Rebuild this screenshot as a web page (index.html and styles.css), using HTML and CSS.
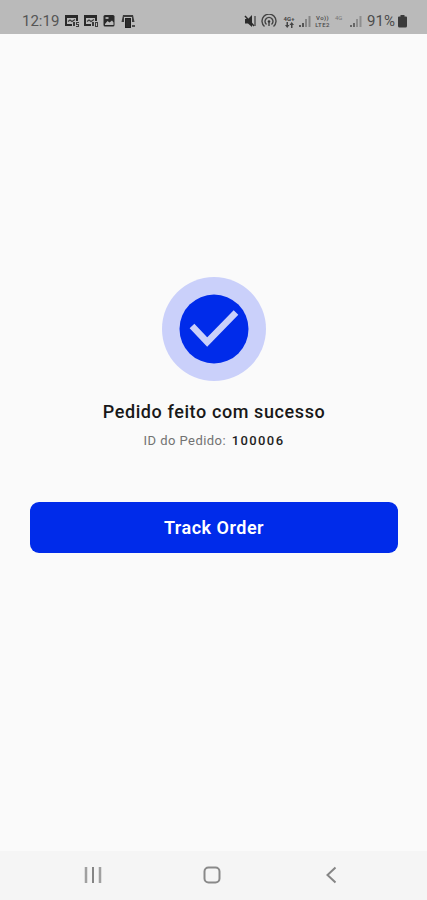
FILE: index.html
```
<!DOCTYPE html>
<html lang="pt">
<head>
  <meta charset="UTF-8" />
  <meta name="viewport" content="width=device-width, initial-scale=1.0"/>
  <title>Pedido feito com sucesso</title>
  <link rel="stylesheet" href="styles.css">
</head>
<body>
  <div class="screen">

    <!-- Status Bar -->
    <header class="status-bar">
      <div class="status-left">
        <span class="time">12:19</span>
        <svg class="news" width="16" height="14" viewBox="0 0 16 14">
          <path d="M1 1h13v6h-2V4H3v6h5v2H1z" fill="#292929"/>
          <path d="M4 7.500l2-1.500 2 1.500 3-2" fill="none" stroke="#3c3c3c" stroke-width="1.300"/>
          <path d="M9 8h2v4H9zM12 8h3v1h-2v1h2v3h-3v-1h2v-1h-2z" fill="#3c3c3c"/>
        </svg>
        <svg class="news" width="16" height="14" viewBox="0 0 16 14">
          <path d="M1 1h13v6h-2V4H3v6h5v2H1z" fill="#292929"/>
          <path d="M4 7.500l2-1.500 2 1.500 3-2" fill="none" stroke="#3c3c3c" stroke-width="1.300"/>
          <path d="M9 8h2v4H9z" fill="#3c3c3c"/>
          <rect x="12.500" y="8.500" width="2" height="4" fill="none" stroke="#3c3c3c"/>
        </svg>
        <svg class="photo" width="12" height="14" viewBox="0 0 12 14">
          <rect x="0.500" y="1" width="11" height="11.500" rx="1.500" fill="#292929"/>
          <path d="M2 10l2.500-3 2 1.500L9 6.500l1.500 2V11H2z" fill="#bababa"/>
          <rect x="2.500" y="3" width="3" height="2" fill="#a5a5a5"/>
        </svg>
        <svg class="store" width="14" height="14" viewBox="0 0 14 14">
          <path d="M2 1h10l1.500 7h-2.500V3H3v5H.5z" fill="#3c3c3c"/>
          <path d="M4 4h6v10H4z" fill="#1f1f1f"/>
          <path d="M6 5v8M8 5v8" stroke="#555" stroke-width="0.500"/>
          <path d="M11 11h3v2h-3z" fill="#4c4c4c"/>
        </svg>
      </div>

      <div class="status-right">
        <svg width="13" height="14" viewBox="0 0 13 14">
          <path d="M1 5h3l4-4v12L4 9.500H1z" fill="#2b2b2b"/>
          <path d="M1 2l9 10" stroke="#2b2b2b" stroke-width="1.500"/>
          <path d="M11 2v10" stroke="#444" stroke-width="1.300"/>
        </svg>
        <svg class="hotspot" width="16" height="14" viewBox="0 0 16 14" fill="none" stroke="#444" stroke-width="1.400">
          <path d="M3.500 12.500a7 7 0 1 1 9 0"/>
          <path d="M5.500 10.500a4 4 0 1 1 5 0"/>
          <circle cx="8" cy="7.500" r="1.300" fill="#333" stroke="none"/>
          <path d="M8 8v4"/>
        </svg>
        <div class="network">
          <span>4G+</span>
          <svg width="10" height="6" viewBox="0 0 10 6" fill="#444">
            <path d="M2.500 0h1.500v3h1.500L3.200 6 1 3h1.500zM7 6h1.500V3H10L7.700 0 5.500 3H7z"/>
          </svg>
        </div>
        <svg class="signal" width="12" height="13" viewBox="0 0 12 13">
          <path d="M0 10h2v2H0zM3 8h2v4H3z" fill="#555"/>
          <path d="M6 4h2v8H6zM9.500 1h2v11h-2z" fill="#858585"/>
        </svg>
        <div class="volte">
          <span>Vo))</span>
          <span>LTE2</span>
        </div>
        <span class="network-off">4G</span>
        <svg class="signal-two" width="12" height="13" viewBox="0 0 12 13">
          <path d="M0 10h2v2H0zM3 8h2v4H3z" fill="#666"/>
          <path d="M6 4h2v8H6zM9.500 1h2v11h-2z" fill="#8e8e8e"/>
        </svg>
        <span class="percent">91%</span>
        <svg width="9" height="13" viewBox="0 0 9 13">
          <path d="M2.500 0h4v1.500H8q1 0 1 1V11q0 1.500-1.500 1.500h-6Q0 12.500 0 11V2.500q0-1 1-1h1.500z" fill="#3a3a3a"/>
        </svg>
      </div>
    </header>

    <!-- Order Success -->
    <main class="order-success">
      <svg class="check" width="104" height="104" viewBox="0 0 104 104">
        <circle cx="52" cy="52" r="52" fill="#cad0fa"/>
        <circle cx="52" cy="52" r="34.500" fill="#002bea"/>
        <path d="M30 49l15.200 16L74 35.500" fill="none" stroke="#cad0fa" stroke-width="6.500"/>
      </svg>
      <h2>Pedido feito com sucesso</h2>
      <p class="order-id">ID do Pedido: <span>100006</span></p>
      <button class="track-btn">Track Order</button>
    </main>

    <!-- Navigation Bar -->
    <nav class="nav-bar">
      <svg width="18" height="18" viewBox="0 0 18 18" fill="none" stroke-width="2">
        <path d="M2 1v16M16 1v16" stroke="#a0a0a0" stroke-width="2.500"/>
        <path d="M9 1v16" stroke="#858585"/>
      </svg>
      <svg width="18" height="18" viewBox="0 0 18 18" fill="none" stroke="#898989" stroke-width="2">
        <rect x="1.500" y="1.500" width="15" height="15" rx="4"/>
      </svg>
      <svg width="18" height="18" viewBox="0 0 18 18" fill="none" stroke="#858585" stroke-width="2">
        <path d="M13.500 1.500L5.500 9l8 7.500"/>
      </svg>
    </nav>
  </div>
</body>
</html>
```
FILE: styles.css
```
body {
  font-family: Roboto, sans-serif;
  margin: 0;
  background-color: #fafafa;
}

.screen {
  display: flex;
  flex-direction: column;
  height: 900px;
}

svg {
  display: block;
  flex-shrink: 0;
}

.status-bar {
  display: flex;
  justify-content: space-between;
  box-sizing: border-box;
  height: 34px;
  padding: 8px 20px 0 22px;
  background-color: #bababa;
}

.status-left, .status-right {
  display: flex;
  align-items: center;
  height: 26px;
}

.time {
  width: 42px;
  font-size: 15px;
  color: #555;
}

.news {
  margin-right: 3px;
}

.photo {
  margin-left: 1px;
  margin-right: 6px;
}

.percent {
  width: 31px;
  font-size: 15px;
  letter-spacing: 0.1px;
  color: #4c4c4c;
}

.hotspot {
  margin-left: 4px;
  margin-right: 6px;
}

.network {
  display: flex;
  flex-direction: column;
  align-items: center;
  width: 12px;
  font-size: 6px;
  line-height: 7px;
  font-weight: 700;
  color: #444;
}

.signal {
  margin-left: 4px;
  margin-right: 3px;
}

.volte {
  display: flex;
  flex-direction: column;
  align-items: center;
  width: 17px;
  font-size: 6px;
  line-height: 7px;
  letter-spacing: 0.4px;
  font-weight: 500;
  color: #484848;
}

.network-off {
  width: 10px;
  margin-left: 4px;
  margin-bottom: 7px;
  font-size: 6px;
  line-height: 6px;
  color: #777;
}

.signal-two {
  margin-left: 5px;
  margin-right: 5px;
}

.order-success {
  display: flex;
  flex: 1;
  flex-direction: column;
  align-items: center;
  padding: 243px 29px 0 30px;
}

h2 {
  margin: 19px 0 0;
  font-size: 18px;
  line-height: 24px;
  font-weight: 500;
  letter-spacing: 0.6px;
  white-space: nowrap;
  color: #181818;
}

.order-id {
  margin: 8px 0 0;
  font-size: 13px;
  line-height: 18px;
  letter-spacing: 0.45px;
  color: #727272;
}

.order-id span {
  margin-left: 2px;
  font-weight: 500;
  letter-spacing: 1.4px;
  color: #1f1f1f;
}

.track-btn {
  width: 100%;
  height: 51px;
  margin-top: 52px;
  padding: 0 0 1px;
  border: none;
  border-radius: 9px;
  background-color: #002bea;
  color: white;
  font-family: inherit;
  font-size: 18px;
  font-weight: 600;
  letter-spacing: 0.5px;
  cursor: pointer;
}

.nav-bar {
  display: flex;
  align-items: center;
  justify-content: space-between;
  box-sizing: border-box;
  height: 49px;
  padding: 0 87px 2px 84px;
  background-color: #f5f5f5;
}
```
